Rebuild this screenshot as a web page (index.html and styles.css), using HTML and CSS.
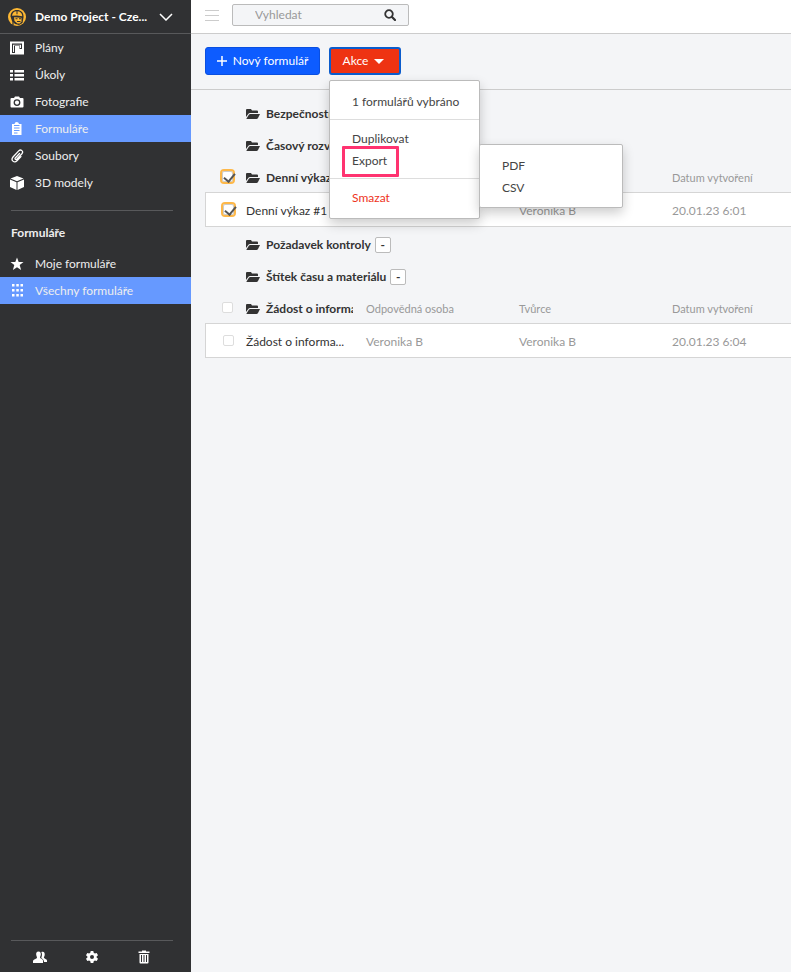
FILE: index.html
```
<!DOCTYPE html>
<html lang="cs">
<head>
    <meta charset="UTF-8">
    <meta name="viewport" content="width=device-width, initial-scale=1.0">
    <title>Formuláře</title>
    <link rel="stylesheet" href="styles.css">
</head>
<body>

<!-- Shared icons -->
<svg class="icon-defs" aria-hidden="true">
    <symbol id="icon-folder" viewBox="0 0 14 12">
        <path d="M0 9V2q0-1 1-1h4l1 1.500h5q1 0 1 1V5H4q-1 0-1.600.800z"/>
        <path d="M.5 10.500 3 6.500Q3.500 6 4.200 6H14l-2 4q-.5 1-1.500 1H1q-.8 0-.5-.5z"/>
    </symbol>
</svg>

<aside class="sidebar">
    <button type="button" class="project">
        <svg class="project-logo" viewBox="0 0 20 20">
            <circle cx="10" cy="10" r="9" fill="#fdb833"/>
            <path d="M3.500 9.500C3.500 5.500 6 3 10 3s6.300 2.500 6.500 6v1.500L15.500 16 12 18l-4-1-3-3z" fill="#303133"/>
            <path d="M5 8.700C5.200 6 7 4.300 9.500 4.200v3h1V4.200c2.500 0 4.500 1.800 4.700 4.200v.8L10 8.500z" fill="#fdb833"/>
            <path d="M7 10.200l7.500.500v3.500l-1.500 2.300h-2.500L7.500 14z" fill="#fdb833"/>
            <path d="M8.500 11.700h2m1.500 0h2M10 14.500h3.500" stroke="#303133" stroke-width="1.100"/>
            <path d="M6 13v5" stroke="#303133" stroke-width="1.200"/>
        </svg>
        <span class="project-name">Demo Project - Cze...</span>
        <svg class="project-arrow" viewBox="0 0 14 8"><path d="M1 1l6 6 6-6" fill="none" stroke="#fff" stroke-width="1.500"/></svg>
    </button>

    <nav class="nav">
        <a href="#">
            <svg viewBox="0 0 14 14"><path d="M0 .5h14v13H0z"/><path d="M2 12V2.500h10V8H9.500V5H5v7z" fill="#303133"/><path d="M3 11V3.700h8V7h-1V4.500H4V11z"/><path d="M6.500 6.500h1.500V9h-2z" fill="#fff"/></svg>
            Plány
        </a>
        <a href="#">
            <svg viewBox="0 0 14 14"><path d="M0 2h3v2.500H0zM4.500 2H14v2.500H4.500zM0 6h3v2.500H0zM4.500 6H14v2.500H4.500zM0 10h3v2.500H0zM4.500 10H14v2.500H4.500z"/></svg>
            Úkoly
        </a>
        <a href="#">
            <svg viewBox="0 0 14 14"><path fill-rule="evenodd" d="M1.500 3H4l1-1.500h4L10 3h2.500q1 0 1 1v7.500q0 1-1 1h-11q-1 0-1-1V4q0-1 1-1zM7 4.200a3.400 3.400 0 1 0 0 6.800 3.400 3.400 0 0 0 0-6.800zm0 1.300a2.100 2.100 0 1 1 0 4.200 2.100 2.100 0 0 1 0-4.200z"/></svg>
            Fotografie
        </a>
        <a href="#" class="active">
            <svg viewBox="0 0 14 14"><path d="M2 2h2.500q.2-2 2.200-2t2.300 2h2.500v11H2z"/><path d="M4 3.500h5.500M4 6h5.500M4 8.500h5.500M4 11h3.500" stroke="#6699ff" stroke-width="1.100"/></svg>
            Formuláře
        </a>
        <a href="#">
            <svg viewBox="0 0 14 14"><path d="M9.500 4.500 5.300 9c-.9 1 .5 2.200 1.400 1.300l5.200-5.600c2-2.300-1-5-3.200-2.800L3 8c-2.700 3.200 1.200 6.500 4 3.800l4-4.200" fill="none" stroke="#fff" stroke-width="1.300" stroke-linecap="round"/></svg>
            Soubory
        </a>
        <a href="#">
            <svg viewBox="0 0 14 14"><path d="M7 0l6.500 2.500L7 5.300.5 2.500zM0 3.500l6.500 2.800V14L0 11zM14 3.500 7.500 6.300V14l6.500-3z"/></svg>
            3D modely
        </a>
    </nav>

    <hr>
    <h2>Formuláře</h2>
    <nav class="nav">
        <a href="#">
            <svg viewBox="0 0 14 14"><path d="M7 .5l1.700 4.500h4.800L9.700 8l1.400 5L7 10.200 2.900 13l1.400-5L.5 5h4.800z"/></svg>
            Moje formuláře
        </a>
        <a href="#" class="active">
            <svg viewBox="0 0 14 14"><path d="M2 0h2.500v2.500H2zM6.300 0h2.500v2.500H6.300zM10.500 0H13v2.500h-2.500zM2 5h2.500v2.500H2zM6.300 5h2.500v2.500H6.300zM10.500 5H13v2.500h-2.500zM2 10h2.500v2.500H2zM6.300 10h2.500v2.500H6.300zM10.500 10H13v2.500h-2.500z"/></svg>
            Všechny formuláře
        </a>
    </nav>

    <div class="sidebar-footer">
        <button type="button" aria-label="Uživatelé">
            <svg viewBox="0 0 14 14"><path d="M5.500 1.500c2 0 2.500 1.500 2.300 3.300C7.700 6 7 7 7 7.500c0 1 3 1.500 3 3V13H0v-2c0-1.800 4-2 4-3.500C4 7 3.300 6 3.200 4.800 3 3 3.500 1.500 5.500 1.500z"/><path d="M8.300 2c2.700-1 3.700.800 3.400 3-.1 1.200-.8 1.800-.8 2.500 0 1.200 3.100 1.500 3.100 3V12h-3c0-3-2.500-3.200-2.700-4.500.8-1.500 1-4 0-5.500z"/></svg>
        </button>
        <button type="button" aria-label="Nastavení">
            <svg viewBox="0 0 14 14"><path fill-rule="evenodd" d="M5.700 1h2.600l.4 1.800 1.200.7 1.800-.6L13 5.200l-1.400 1.200v1.200L13 8.800l-1.300 2.300-1.800-.6-1.200.7-.4 1.800H5.700l-.4-1.800-1.200-.7-1.800.6L1 8.800l1.400-1.200V6.400L1 5.200l1.300-2.300 1.800.6 1.200-.7zM7 5a2 2 0 1 0 0 4 2 2 0 0 0 0-4z"/></svg>
        </button>
        <button type="button" aria-label="Koš">
            <svg viewBox="0 0 14 14"><path d="M1.500 1.500H5V.5h4v1h3.500V3h-11zM2.500 4h9v8.500q0 1-1 1h-7q-1 0-1-1z"/><path d="M4.500 5v7M7 5v7M9.500 5v7" stroke="#303133"/></svg>
        </button>
    </div>
</aside>

<main class="content">
    <header class="topbar">
        <button type="button" class="menu-toggle" aria-label="Menu"><span></span><span></span><span></span></button>
        <form class="search" action="#">
            <input type="text" placeholder="Vyhledat" aria-label="Vyhledat">
            <button type="submit" aria-label="Hledat">
                <svg viewBox="0 0 12 12"><path d="M8 8l3 3" stroke="#333" stroke-width="2.200" stroke-linecap="round"/><circle cx="5" cy="5" r="3.800" fill="none" stroke="#333" stroke-width="1.800"/></svg>
            </button>
        </form>
    </header>

    <div class="toolbar">
        <button type="button" class="btn btn-new">
            <svg viewBox="0 0 10 10"><path d="M5 0v10M0 5h10" stroke="#fff" stroke-width="1.500"/></svg>
            Nový formulář
        </button>
        <div class="dropdown">
            <button type="button" class="btn btn-actions">
                Akce
                <svg viewBox="0 0 10 5"><path d="M0 0h10L5 5z"/></svg>
            </button>
            <div class="menu">
                <p class="menu-title">1 formulářů vybráno</p>
                <div class="menu-section">
                    <button type="button">Duplikovat</button>
                    <button type="button" class="highlighted">Export</button>
                </div>
                <div class="menu-section">
                    <button type="button" class="danger">Smazat</button>
                </div>
                <div class="menu submenu">
                    <button type="button">PDF</button>
                    <button type="button">CSV</button>
                </div>
            </div>
        </div>
    </div>

    <div class="forms">
        <div class="group"><svg class="folder"><use href="#icon-folder"/></svg>Bezpečnostní kontrola</div>
        <div class="group"><svg class="folder"><use href="#icon-folder"/></svg>Časový rozvrh</div>

        <table>
            <thead>
                <tr>
                    <th class="col-check"><input type="checkbox" aria-label="Vybrat vše" checked></th>
                    <th class="col-name"><div class="group-name"><svg class="folder"><use href="#icon-folder"/></svg>Denní výkaz</div></th>
                    <th class="col-person">Odpovědná osoba</th>
                    <th class="col-person">Tvůrce</th>
                    <th>Datum vytvoření</th>
                </tr>
            </thead>
            <tbody>
                <tr>
                    <td><input type="checkbox" aria-label="Vybrat Denní výkaz #1" checked></td>
                    <td class="form-name">Denní výkaz #1 - ...</td>
                    <td>Veronika B</td>
                    <td>Veronika B</td>
                    <td>20.01.23 6:01</td>
                </tr>
            </tbody>
        </table>

        <div class="group"><svg class="folder"><use href="#icon-folder"/></svg>Požadavek kontroly <button type="button" class="collapse">-</button></div>
        <div class="group"><svg class="folder"><use href="#icon-folder"/></svg>Štítek času a materiálu <button type="button" class="collapse">-</button></div>

        <table>
            <thead>
                <tr>
                    <th class="col-check"><input type="checkbox" aria-label="Vybrat vše"></th>
                    <th class="col-name"><div class="group-name"><svg class="folder"><use href="#icon-folder"/></svg>Žádost o informace</div></th>
                    <th class="col-person">Odpovědná osoba</th>
                    <th class="col-person">Tvůrce</th>
                    <th>Datum vytvoření</th>
                </tr>
            </thead>
            <tbody>
                <tr>
                    <td><input type="checkbox" aria-label="Vybrat Žádost o informace"></td>
                    <td class="form-name">Žádost o informa...</td>
                    <td>Veronika B</td>
                    <td>Veronika B</td>
                    <td>20.01.23 6:04</td>
                </tr>
            </tbody>
        </table>
    </div>
</main>

</body>
</html>
```
FILE: styles.css
```
* {
    box-sizing: border-box;
}

body {
    margin: 0;
    display: flex;
    min-height: 100vh;
    font-family: Lato, "Liberation Sans", sans-serif;
    font-size: 12px;
    line-height: 16px;
    color: #333;
    background-color: #f4f5f7;
}

button,
input {
    font: inherit;
}

button {
    margin: 0;
    padding: 0;
    border: none;
    background: none;
    color: inherit;
    cursor: pointer;
}

.icon-defs {
    position: absolute;
    width: 0;
    height: 0;
}

/* Sidebar */
.sidebar {
    width: 191px;
    flex-shrink: 0;
    display: flex;
    flex-direction: column;
    background-color: #303133;
    color: #fff;
}

.project {
    display: flex;
    align-items: center;
    height: 34px;
    padding: 0 18px 0 7px;
    border-bottom: 1px solid #58595b;
    font-weight: bold;
    text-align: left;
}

.project-logo {
    width: 20px;
    height: 20px;
    margin-right: 8px;
}

.project-name {
    flex: 1;
    white-space: nowrap;
}

.project-arrow {
    width: 14px;
    height: 8px;
}

.nav a {
    display: flex;
    align-items: center;
    gap: 11px;
    height: 27px;
    padding-left: 10px;
    color: #eee;
    text-decoration: none;
}

.nav a.active {
    background-color: #6699ff;
}

.nav svg {
    width: 14px;
    height: 14px;
    fill: #fff;
}

.sidebar hr {
    width: 162px;
    margin: 14px 0 0 11px;
    border: none;
    border-top: 1px solid #58595b;
}

.sidebar h2 {
    margin: 14px 11px 9px;
    font-size: 12px;
    color: #eee;
}

.sidebar-footer {
    display: flex;
    justify-content: space-between;
    width: 162px;
    margin: auto 0 0 11px;
    padding: 9px 22px 8px;
    border-top: 1px solid #58595b;
}

.sidebar-footer button {
    height: 14px;
}

.sidebar-footer svg {
    display: block;
    width: 14px;
    height: 14px;
    fill: #fff;
}

/* Top bar */
.content {
    flex: 1;
    min-width: 0;
}

.topbar {
    display: flex;
    align-items: center;
    gap: 13px;
    height: 34px;
    padding: 0 14px 3px;
    background-color: #fff;
    border-bottom: 1px solid #ccc;
}

.menu-toggle {
    display: flex;
    flex-direction: column;
    gap: 4px;
    width: 14px;
}

.menu-toggle span {
    height: 1px;
    background-color: #ccc;
}

.search {
    display: flex;
    align-items: center;
    width: 177px;
    height: 22px;
    padding: 0 12px 0 22px;
    border: 1px solid #bbb;
    border-radius: 2px;
    background-color: #f4f5f7;
}

.search input {
    flex: 1;
    min-width: 0;
    padding: 0;
    border: none;
    outline: none;
    background: none;
}

.search input::placeholder {
    color: #999;
}

.search svg {
    display: block;
    width: 12px;
    height: 12px;
}

/* Toolbar */
.toolbar {
    display: flex;
    gap: 9px;
    padding: 13px 14px 14px;
    border-bottom: 1px solid #ccc;
}

.btn {
    display: flex;
    align-items: center;
    justify-content: center;
    gap: 6px;
    height: 28px;
    border-radius: 3px;
    color: #fff;
}

.btn svg {
    width: 10px;
}

.btn-new {
    width: 115px;
    border: 1px solid #0a4fe0;
    background-color: #0d5cff;
}

.btn-actions {
    width: 72px;
    padding-right: 3px;
    border: 2px solid #0b5ccc;
    background-color: #ee3312;
}

.btn-actions svg {
    height: 5px;
    fill: #fff;
}

.dropdown {
    position: relative;
}

.menu {
    position: absolute;
    z-index: 10;
    top: 33px;
    left: 0;
    width: 151px;
    padding: 10px 0 9px;
    border: 1px solid #bbb;
    border-radius: 2px;
    background-color: #fff;
    box-shadow: 0 5px 12px rgba(0, 0, 0, 0.2);
}

.menu button,
.menu-title {
    display: block;
    margin: 0;
    padding: 3px 0 3px 22px;
    color: #444;
}

.menu-section {
    margin-top: 6px;
    padding-top: 8px;
    border-top: 1px solid #ddd;
}

.menu button.danger {
    color: #ee3322;
}

.menu button.highlighted {
    position: relative;
}

.highlighted::after {
    content: "";
    position: absolute;
    inset: -4px -12px -5px 12px;
    border: 3px solid #ff3370;
    border-radius: 1px;
}

.submenu {
    top: 63px;
    left: 149px;
    width: 144px;
    padding-bottom: 8px;
}

/* List of forms */
.forms {
    padding: 6px 0 0 14px;
}

.group {
    display: flex;
    align-items: center;
    height: 32px;
    padding: 3px 0 0 41px;
    font-weight: bold;
}

.folder {
    flex-shrink: 0;
    width: 14px;
    height: 12px;
    margin-right: 6px;
    fill: #333;
}

.collapse {
    width: 16px;
    height: 16px;
    margin-left: 4px;
    border: 1px solid #bbb;
    border-radius: 2px;
    background-color: #fff;
    font-weight: bold;
    line-height: 14px;
}

table {
    width: 100%;
    table-layout: fixed;
    border-spacing: 0;
}

th,
td {
    padding: 0;
    text-align: left;
    color: #999;
}

th {
    height: 32px;
    padding-top: 4px;
    font-size: 11px;
    font-weight: normal;
}

td {
    height: 35px;
    padding-top: 3px;
    border-top: 1px solid #d5d5d5;
    border-bottom: 1px solid #d5d5d5;
    background-color: #fff;
}

td:first-child {
    border-left: 1px solid #d5d5d5;
}

.col-check {
    width: 41px;
}

.col-name {
    width: 120px;
}

.col-person {
    width: 153px;
}

.group-name {
    display: flex;
    align-items: center;
    width: 107px;
    overflow: hidden;
    white-space: nowrap;
    font-size: 12px;
    font-weight: bold;
    color: #333;
}

td.form-name {
    color: #333;
}

input[type="checkbox"] {
    appearance: none;
    display: block;
    width: 11px;
    height: 11px;
    margin: 0 0 4px 17px;
    border: 1px solid #ddd;
    border-radius: 2px;
    background-color: #fff;
}

input[type="checkbox"]:checked {
    border-color: #ccc;
    outline: 2px solid #fdb84a;
}

input[type="checkbox"]:checked::before {
    content: "";
    display: block;
    width: 5px;
    height: 9px;
    margin: -1px 0 0 3px;
    border: solid #555;
    border-width: 0 2px 2px 0;
    transform: rotate(40deg);
}
```
